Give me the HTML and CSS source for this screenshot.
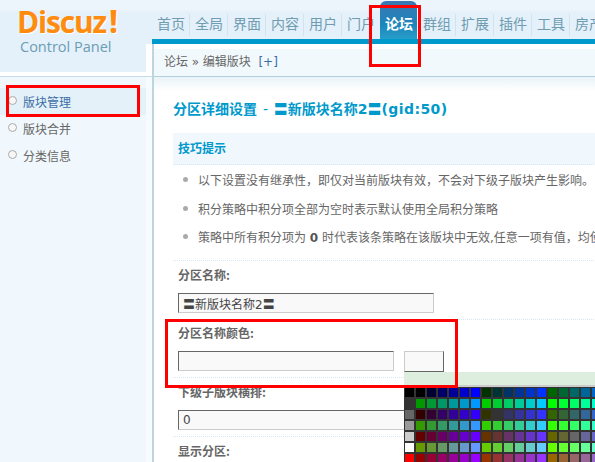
FILE: index.html
```html
<!DOCTYPE html>
<html lang="zh">
<head>
<meta charset="utf-8">
<title>Discuz! Control Panel</title>
<link rel="stylesheet" href="styles.css">
</head>
<body>
<div class="page">
  <header class="top">
    <nav class="nav">
      <a class="nav-item">首页</a><a class="nav-item">全局</a><a class="nav-item">界面</a><a class="nav-item">内容</a><a class="nav-item">用户</a><a class="nav-item">门户</a><a class="nav-item active">论坛</a><a class="nav-item">群组</a><a class="nav-item">扩展</a><a class="nav-item">插件</a><a class="nav-item">工具</a><a class="nav-item">房产</a>
    </nav>
  </header>
  <div class="body">
    <aside class="side">
      <div class="logo">
        <div class="logo-mark">Discuz<span class="bang">!</span></div>
        <div class="logo-sub">Control Panel</div>
      </div>
      <ul class="side-list">
        <li class="side-item current">版块管理</li>
        <li class="side-item">版块合并</li>
        <li class="side-item">分类信息</li>
      </ul>
    </aside>
    <main class="main">
      <div class="crumb">论坛 <span class="raquo">»</span> 编辑版块 <span class="plus">[+]</span></div>
      <div class="content">
        <h1 class="title">分区详细设置 <span class="dash">-</span> 〓新版块名称2〓<span class="gid">(gid:50)</span></h1>
        <h2 class="tips-head">技巧提示</h2>
        <ul class="tips">
          <li>以下设置没有继承性，即仅对当前版块有效，不会对下级子版块产生影响。</li>
          <li>积分策略中积分项全部为空时表示默认使用全局积分策略</li>
          <li>策略中所有积分项为 <b>0</b> 时代表该条策略在该版块中无效,任意一项有值，均使用该策略</li>
        </ul>
        <section class="row">
          <label class="row-label">分区名称:</label>
          <input class="field" type="text" value="〓新版块名称2〓">
        </section>
        <section class="row tight">
          <label class="row-label">分区名称颜色:</label>
          <div class="color-line">
            <input class="field short" type="text">
            <button class="swatch" type="button"></button>
          </div>
        </section>
        <section class="row">
          <label class="row-label">下级子版块横排:</label>
          <input class="field wide" type="text" value="0">
        </section>
        <section class="row last">
          <label class="row-label">显示分区:</label>
        </section>
      </div>
    </main>
  </div>

  <div class="picker">
    <div class="picker-head"></div>
    <div class="picker-grid" id="grid"></div>
  </div>

  <div class="mark mark-side"></div>
  <div class="mark mark-nav"></div>
  <div class="mark mark-row"></div>
</div>
<script src="script.js"></script>
</body>
</html>
```

FILE: styles.css
```css
* { box-sizing: border-box; }
html, body { margin: 0; padding: 0; }
body {
  font: 12px/1.5 "DejaVu Sans", "Noto Sans CJK SC", sans-serif;
  color: #666;
  background: #fff;
}
.page {
  position: relative;
  width: 595px;
  height: 462px;
  overflow: hidden;
  background: #f2f9fd;
}
.top {
  display: flex;
  justify-content: flex-end;
  height: 44px;
  background: linear-gradient(#ecf5fc 0, #ecf5fc 10px, #e4f0fa 12px, #e4f0fa 100%);
}
.logo {
  width: 146px;
  height: 76px;
  margin-top: -44px;
  padding: 4px 0 0 17px;
  border-bottom: 4px solid #fff;
  background: linear-gradient(#ecf5fc 0, #ecf5fc 10px, #e4f0fa 12px, #e4f0fa 100%);
}
.logo-mark {
  font: bold 30px/34px "Open Sans", "Liberation Sans", sans-serif;
  letter-spacing: -1.2px;
  color: #ff8c0f;
  text-shadow: 1px 1px 0 #fff;
  height: 34px;
  white-space: nowrap;
}
.bang { margin-left: 3px; font-size: 33px; }
.logo-sub {
  font: 14.5px/18px "Open Sans", "Liberation Sans", sans-serif;
  color: #6b9db5;
  margin: 0 0 0 3px;
  white-space: nowrap;
}
.nav {
  position: relative;
  display: flex;
  flex: none;
  width: 443px;
  height: 44px;
  padding-top: 14px;
  border-bottom: 5px solid #0099cc;
  white-space: nowrap;
  overflow: hidden;
}
.nav-item {
  flex: none;
  width: 38px;
  height: 22px;
  padding-left: 5px;
  font: 14px/19px "Noto Sans CJK SC", sans-serif;
  color: #6f9cb0;
  border-right: 1px solid #d3e3ee;
}
.nav-item:last-child { border-right: 0; }
.nav-item.active {
  position: absolute;
  left: 228px;
  top: 1px;
  width: 37px;
  height: 43px;
  padding: 13px 0 0 5px;
  border: 0;
  border-radius: 6px 6px 0 0;
  background: linear-gradient(#3a78b2, #1d85bb 55%, #2aa6cf);
  color: #fff;
  font-weight: bold;
}
.nav-item:nth-child(6) { margin-right: 38px; border-right: 0; }
.body { display: flex; height: 418px; }
.side {
  width: 152px;
  flex: none;
  background: #fff;
}
.side-list {
  list-style: none;
  margin: 0;
  padding: 11px 6px 0 0;
  height: 386px;
  border-top: 1px solid #c6dbe5;
  background: linear-gradient(to right, #f0f8fd 146px, #f5fbfe 146px);
}
.side-item {
  position: relative;
  height: 27px;
  padding-left: 23px;
  font: 12px/27px "Noto Sans CJK SC", sans-serif;
  color: #666;
}
.side-item::before {
  content: "";
  position: absolute;
  left: 8px;
  top: 8px;
  width: 7px;
  height: 7px;
  border: 1px solid #aaa;
  border-radius: 50%;
  background: #f7f7f7;
}
.side-item.current { background: #e4f1f9; color: #3a6ea5; }
.main {
  flex: none;
  width: 443px;
  background: #fff;
  overflow: hidden;
  border-left: 2px solid #bcd5e0;
}
.crumb {
  height: 33px;
  padding: 5px 0 0 10px;
  background: linear-gradient(#fff 5px, #f2f9fd 5px);
  font: 12px/24px "Noto Sans CJK SC", sans-serif;
  color: #666;
  white-space: nowrap;
  border-bottom: 1px solid #b5d0dd;
}
.plus { margin-left: 5px; color: #3a6ea5; font-family: "DejaVu Sans", sans-serif; }
.raquo { font-family: "DejaVu Sans", sans-serif; margin: 0 1px; }
.content {
  padding-left: 19px;
  height: 385px;
  background: linear-gradient(#e9f3f8, #fff 14px);
  width: 600px;
}
.title {
  margin: 0;
  padding-top: 22px;
  height: 56px;
  font: bold 14px/21px "DejaVu Sans", "Noto Sans CJK SC", sans-serif;
  color: #0099cc;
  white-space: nowrap;
}
.dash { font-weight: normal; margin: 0 1px; }
.gid { letter-spacing: 0.4px; }
.tips-head {
  margin: 0;
  height: 32px;
  padding-left: 5px;
  background: #f0f7fd;
  border-bottom: 1px dotted #d3e8f5;
  font: bold 12px/30px "Noto Sans CJK SC", sans-serif;
  color: #0099cc;
}
.tips {
  list-style: none;
  margin: 0;
  padding: 3px 0 0;
  height: 96px;
  border-bottom: 1px dotted #d3e8f5;
}
.tips li {
  position: relative;
  height: 28.5px;
  padding-left: 25px;
  line-height: 26px;
  color: #666;
  white-space: nowrap;
}
.tips li::before {
  content: "";
  position: absolute;
  left: 10px;
  top: 9px;
  width: 5px;
  height: 5px;
  border-radius: 50%;
  background: #aaa;
}
.tips b { color: #555; }
.row {
  height: 59px;
  padding: 4px 0 0 5px;
  border-bottom: 1px dotted #d3e8f5;
}
.row.tight { height: 58px; padding-top: 3px; }
.row.last { border-bottom: 0; }
.row-label {
  display: block;
  height: 28px;
  font: bold 12px/20px "Noto Sans CJK SC", sans-serif;
  color: #666;
}
.field {
  display: block;
  width: 256px;
  height: 20px;
  padding: 0 4px;
  border: 1px solid;
  border-color: #666 #ccc #ccc #666;
  background: #f9f9f9;
  font: 12px/18px "DejaVu Sans", "Noto Sans CJK SC", sans-serif;
  color: #444;
}
.field.short { width: 216px; }
.field.wide { width: 300px; }
.color-line { display: flex; gap: 10px; }
.swatch {
  width: 40px;
  height: 21px;
  padding: 0;
  border: 1px solid;
  border-color: #ccc #666 #666 #ccc;
  background: #f9f9f9;
}
.picker {
  position: absolute;
  left: 404px;
  top: 372px;
  width: 198px;
}
.picker-head {
  height: 15px;
  background: #deeede;
  border-bottom: 2px solid #ccc;
}
.picker-grid {
  display: grid;
  grid-template-columns: repeat(18, 11px);
  grid-auto-rows: 11px;
  background: #333;
}
.cell { border: 1px solid #333; }
.mark {
  position: absolute;
  border: 3px solid #f00;
  pointer-events: none;
}
.mark-side { left: 6px; top: 85px; width: 134px; height: 32px; }
.mark-nav { left: 369px; top: 5px; width: 52px; height: 62px; }
.mark-row { left: 165px; top: 319px; width: 293px; height: 69px; }
```

FILE: script.js
```js
var hex = ["00", "33", "66", "99", "cc", "ff"];
var grid = document.getElementById("grid");
var first = ["#000", "#333", "#666", "#999", "#ccc", "#fff", "#f00"];
var frag = document.createDocumentFragment();
function add(color) {
  var c = document.createElement("div");
  c.className = "cell";
  c.style.background = color;
  frag.appendChild(c);
}
for (var row = 0; row < 7; row++) {
  add(first[row]);
  var r = hex[Math.floor(row / 2)];
  var gOffset = row % 2 === 0 ? 0 : 3;
  for (var g = 0; g < 3; g++) {
    for (var b = 0; b < 6; b++) {
      if (g === 2 && b === 5) continue;
      add("#" + r + hex[g + gOffset] + hex[b]);
    }
  }
}
grid.appendChild(frag);
```
